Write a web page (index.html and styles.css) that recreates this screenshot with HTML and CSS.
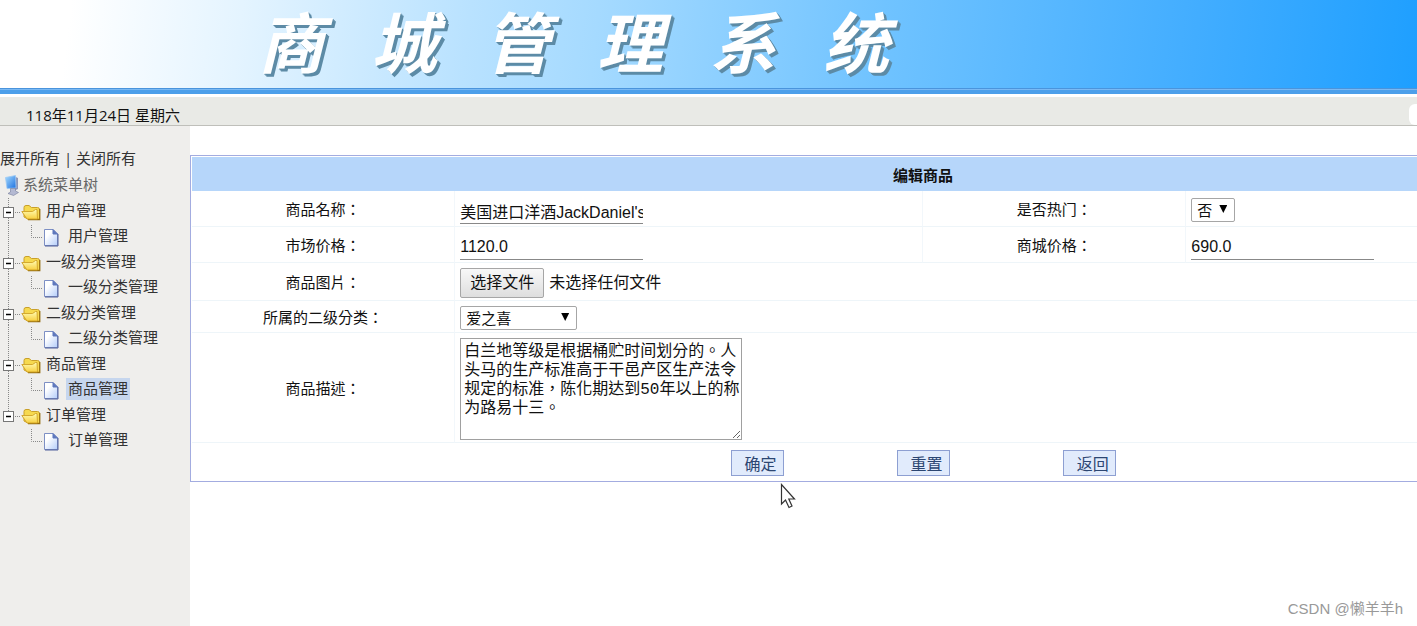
FILE: index.html
```
<!DOCTYPE html>
<html lang="zh-CN">
<head>
<meta charset="utf-8">
<title>商城管理系统</title>
<link rel="stylesheet" href="styles.css">
</head>
<body>
<svg class="symbols" aria-hidden="true">
  <defs>
    <linearGradient id="gFolder" x1="0" y1="0" x2="0" y2="1"><stop offset="0" stop-color="#fffbb4"/><stop offset="1" stop-color="#f8d040"/></linearGradient>
    <linearGradient id="gPage" x1="0" y1="0" x2="1" y2="1"><stop offset="0.3" stop-color="#ffffff"/><stop offset="1" stop-color="#b4cdfa"/></linearGradient>
    <linearGradient id="gScreen" x1="0" y1="0" x2="1" y2="1"><stop offset="0" stop-color="#a6dcff"/><stop offset="1" stop-color="#1c6fe0"/></linearGradient>
  </defs>
  <symbol id="parent" viewBox="0 0 21 25">
    <path d="M8.500 0V9M8.500 20V25M15 14.500H21" class="dots"/>
    <rect x="3.500" y="9.500" width="10" height="10" fill="#fff" stroke="#777"/>
    <path d="M6 14.500H11" stroke="#000" stroke-width="1.500"/>
  </symbol>
  <symbol id="parent-last" viewBox="0 0 21 25">
    <path d="M8.500 0V9M15 14.500H21" class="dots"/>
    <rect x="3.500" y="9.500" width="10" height="10" fill="#fff" stroke="#777"/>
    <path d="M6 14.500H11" stroke="#000" stroke-width="1.500"/>
  </symbol>
  <symbol id="child" viewBox="0 0 43 26">
    <path d="M8.500 0V26M31.500 2V14.500H43" class="dots"/>
  </symbol>
  <symbol id="child-last" viewBox="0 0 43 26">
    <path d="M31.500 2V14.500H43" class="dots"/>
  </symbol>
  <symbol id="folder" viewBox="0 0 20 25">
    <path d="M3 19V9.500Q3 7.500 5 7.500H8L10.500 9.500H16.500Q18.500 9.500 18.500 11.500V21H7Z" fill="#f6d94f" stroke="#c9a02a"/>
    <path d="M18.800 11V21.600H7" fill="none" stroke="#946c10" stroke-width="1.200"/>
    <path d="M0.800 13.500H11.500L14.500 11.500H16L16.500 21H6Z" fill="url(#gFolder)" stroke="#cfa227" stroke-width="0.900"/>
  </symbol>
  <symbol id="page" viewBox="0 0 16 26">
    <path d="M1.500 6.500H10L14.500 11V22.500H1.500Z" fill="url(#gPage)" stroke="#7d8fc4"/>
    <path d="M10 6.500V11H14.500Z" fill="#5f78bd" stroke="#5f78bd"/>
    <path d="M2 23H15V11" fill="none" stroke="#52619b"/>
  </symbol>
  <symbol id="computer" viewBox="0 0 20 26">
    <path d="M13 4.500L16.500 6V17L13 18.500Z" fill="#8d96b8"/>
    <path d="M4 5.500L14 3.500L14.500 16L5.500 16.500Z" fill="url(#gScreen)" stroke="#9cc8f4" stroke-width="0.800"/>
    <path d="M9 16.500H14V19L17 20.500L12 23.500L6.500 21.500L9 20Z" fill="#b4b9d2" stroke="#777d9c" stroke-width="0.600"/>
  </symbol>
</svg>

<header class="banner">
  <h1 class="banner-title"><span>商</span><span>城</span><span>管</span><span>理</span><span>系</span><span>统</span></h1>
</header>
<div class="status"><time>118年11月24日 星期六</time><span class="status-tab"></span></div>

<div class="layout">
  <nav class="sidebar">
    <p class="tree-actions"><a href="#">展开所有</a> | <a href="#">关闭所有</a></p>
    <div class="tree-root"><svg class="i-root"><use href="#computer"/></svg><span>系统菜单树</span></div>
    <a class="parent" href="#"><svg class="i-line"><use href="#parent"/></svg><svg class="i-folder"><use href="#folder"/></svg><span>用户管理</span></a>
    <a class="child" href="#"><svg class="i-branch"><use href="#child"/></svg><svg class="i-page"><use href="#page"/></svg><span>用户管理</span></a>
    <a class="parent" href="#"><svg class="i-line"><use href="#parent"/></svg><svg class="i-folder"><use href="#folder"/></svg><span>一级分类管理</span></a>
    <a class="child" href="#"><svg class="i-branch"><use href="#child"/></svg><svg class="i-page"><use href="#page"/></svg><span>一级分类管理</span></a>
    <a class="parent" href="#"><svg class="i-line"><use href="#parent"/></svg><svg class="i-folder"><use href="#folder"/></svg><span>二级分类管理</span></a>
    <a class="child" href="#"><svg class="i-branch"><use href="#child"/></svg><svg class="i-page"><use href="#page"/></svg><span>二级分类管理</span></a>
    <a class="parent" href="#"><svg class="i-line"><use href="#parent"/></svg><svg class="i-folder"><use href="#folder"/></svg><span>商品管理</span></a>
    <a class="child active" href="#"><svg class="i-branch"><use href="#child"/></svg><svg class="i-page"><use href="#page"/></svg><span>商品管理</span></a>
    <a class="parent" href="#"><svg class="i-line"><use href="#parent-last"/></svg><svg class="i-folder"><use href="#folder"/></svg><span>订单管理</span></a>
    <a class="child" href="#"><svg class="i-branch"><use href="#child-last"/></svg><svg class="i-page"><use href="#page"/></svg><span>订单管理</span></a>
  </nav>

  <main class="content">
    <form class="editor">
      <h2 class="editor-title">编辑商品</h2>
      <div class="grid">
        <label class="cell name" for="pname">商品名称：</label>
        <div class="cell"><input class="line-input" id="pname" type="text" value="美国进口洋酒JackDaniel's"></div>
        <label class="cell name" for="hot">是否热门：</label>
        <div class="cell"><span class="select"><select id="hot"><option>否</option><option>是</option></select></span></div>

        <label class="cell name" for="market">市场价格：</label>
        <div class="cell"><input class="line-input" id="market" type="text" value="1120.0"></div>
        <label class="cell name" for="shop">商城价格：</label>
        <div class="cell"><input class="line-input" id="shop" type="text" value="690.0"></div>

        <label class="cell name" for="image">商品图片：</label>
        <div class="cell wide"><label class="file"><input id="image" type="file"><span class="file-button">选择文件</span><span>未选择任何文件</span></label></div>

        <label class="cell name" for="category">所属的二级分类：</label>
        <div class="cell wide"><span class="select category"><select id="category"><option>爱之喜</option></select></span></div>

        <label class="cell name" for="desc">商品描述：</label>
        <div class="cell wide"><textarea class="description" id="desc">白兰地等级是根据桶贮时间划分的。人头马的生产标准高于干邑产区生产法令规定的标准，陈化期达到50年以上的称为路易十三。</textarea></div>
      </div>
      <div class="buttons">
        <button type="submit">确定</button>
        <button type="reset">重置</button>
        <button type="button">返回</button>
      </div>
    </form>
  </main>
</div>

<svg class="pointer" viewBox="0 0 16 26" aria-hidden="true"><path d="M1.500 1.500V21L5.500 17L9 24.500L12 23L8.800 16H14.500Z" fill="#fff" stroke="#333" stroke-width="1.200"/></svg>
<div class="watermark">CSDN @懒羊羊h</div>
</body>
</html>
```
FILE: styles.css
```
* { box-sizing: border-box; }

body {
  margin: 0;
  min-height: 100vh;
  display: flex;
  flex-direction: column;
  position: relative;
  overflow: hidden;
  background: #fff;
  color: #111;
  font: 15px/20px "Open Sans", "Noto Sans CJK SC", sans-serif;
}

a { color: inherit; text-decoration: none; }
svg { display: block; flex: none; }
.symbols { position: absolute; width: 0; height: 0; }
.dots { fill: none; stroke: #888; stroke-dasharray: 1 1; }

.banner {
  height: 97px;
  padding-left: 258px;
  background: linear-gradient(97deg, #fff 5%, #e4f4ff 17%, #b9e2ff 33%, #a5daff 42%, #70c3ff 62%, #42adff 84%, #1e9fff 100%);
  border-bottom: 3px solid #fff;
  box-shadow: inset 0 -4px #4c9fea, inset 0 -5px #7ab9f4, inset 0 -6px #4a94dc;
}
.banner-title {
  margin: 0;
  display: flex;
  gap: 47px;
  font: italic bold 66px/78px "Noto Sans CJK SC", sans-serif;
  color: #fff;
  text-shadow: 1px 1px #5d8ba6, 2px 2px #5d8ba6, 3px 3px #5d8ba6;
}

.status {
  height: 29px;
  padding-left: 26px;
  display: flex;
  justify-content: space-between;
  align-items: flex-end;
  background: #e9eae6;
  border-bottom: 1px solid #bfbfba;
}
.status-tab { width: 8px; height: 21px; background: #fff; border-radius: 6px 0 0 6px; }

.layout { flex: 1; display: flex; }
.sidebar {
  flex: none;
  width: 190px;
  padding-top: 22px;
  background: #efeeec;
  color: #333;
}
.tree-actions { margin: 0 0 4px; white-space: pre; }
.tree-root { display: flex; align-items: center; height: 26px; color: #666; }
.i-root { width: 23px; height: 26px; }
.parent, .child { display: flex; align-items: center; }
.parent { height: 25px; }
.child { height: 26px; }
.i-line { width: 21px; height: 25px; }
.i-folder { width: 20px; height: 25px; }
.parent span { padding: 0 0 2px 5px; }
.tree-root span { padding-bottom: 2px; }
.i-branch { width: 43px; height: 26px; }
.i-page { width: 16px; height: 26px; margin-right: 7px; }
.child span { padding: 0 2px 2px; }
.active span { background: #c6d6ee; }

.content { flex: 1; min-width: 0; padding-top: 29px; overflow: hidden; }
.editor {
  width: 119.5%;
  padding: 1px;
  border: 1px solid #a3ace0;
  font-family: "Liberation Sans", "Noto Sans CJK TC", sans-serif;
  font-feature-settings: "locl" 0;
}
.editor-title {
  margin: 0;
  padding: 8px 0 6px;
  background: #b6d6fa;
  text-align: center;
  font: bold 15px/20px "Noto Sans CJK SC", sans-serif;
}
.grid { display: grid; grid-template-columns: 18fr 32fr 18fr 32fr; }
.cell {
  display: flex;
  align-items: center;
  padding: 5px 5px 2px;
  border-right: 1px solid #f2f7fb;
  border-bottom: 1px solid #eef5f9;
}
.name { justify-content: center; }
.wide { grid-column: span 3; }

input, select, textarea, button { margin: 0; color: #111; font: 16px/20px "Liberation Sans", "Noto Sans CJK SC", sans-serif; }
.line-input {
  width: 183px;
  height: 28px;
  padding: 2px 0 0;
  border: 0;
  border-bottom: 1px solid #888;
  outline: 0;
  background: transparent;
}

.select { position: relative; }
.select::after {
  content: "";
  position: absolute;
  top: 7px;
  right: 8px;
  width: 8px;
  height: 8px;
  background: #000;
  clip-path: polygon(0 0, 100% 0, 50% 100%);
  pointer-events: none;
}
.select select {
  display: block;
  appearance: none;
  width: 44px;
  height: 24px;
  padding: 2px 5px 0;
  border: 1px solid #a6a6a6;
  border-radius: 2px;
  background: #fff;
  font-size: 15px;
}
.category select { width: 117px; }

.file { display: flex; align-items: center; gap: 5px; font-size: 16px; }
.file input { position: absolute; width: 1px; height: 1px; opacity: 0; }
.file-button {
  padding: 4px 9px;
  border: 1px solid #a6a6a6;
  border-radius: 2px;
  background: linear-gradient(#f8f8f8, #dedede);
}

.description {
  width: 282px;
  height: 102px;
  padding: 4px 1px 0 3px;
  overflow: hidden;
  resize: both;
  border: 1px solid #a0a0a0;
  background: #fff;
  font: 16px/19px "Liberation Mono", "Noto Sans CJK TC", monospace;
  font-feature-settings: "locl" 0;
}

.buttons { display: flex; justify-content: center; gap: 113px; padding: 7px 0 4px; }
.buttons button {
  height: 26px;
  padding: 4px 6px 0 13px;
  border: 1px solid #8d9fd2;
  background: #e1ebfc;
  color: #2c4672;
}

.pointer { position: absolute; left: 780px; top: 483px; width: 16px; height: 26px; }
.watermark { position: absolute; right: 14px; bottom: 7px; color: #999; font: 15px/20px "Liberation Sans", "Noto Sans CJK SC", sans-serif; }
```
